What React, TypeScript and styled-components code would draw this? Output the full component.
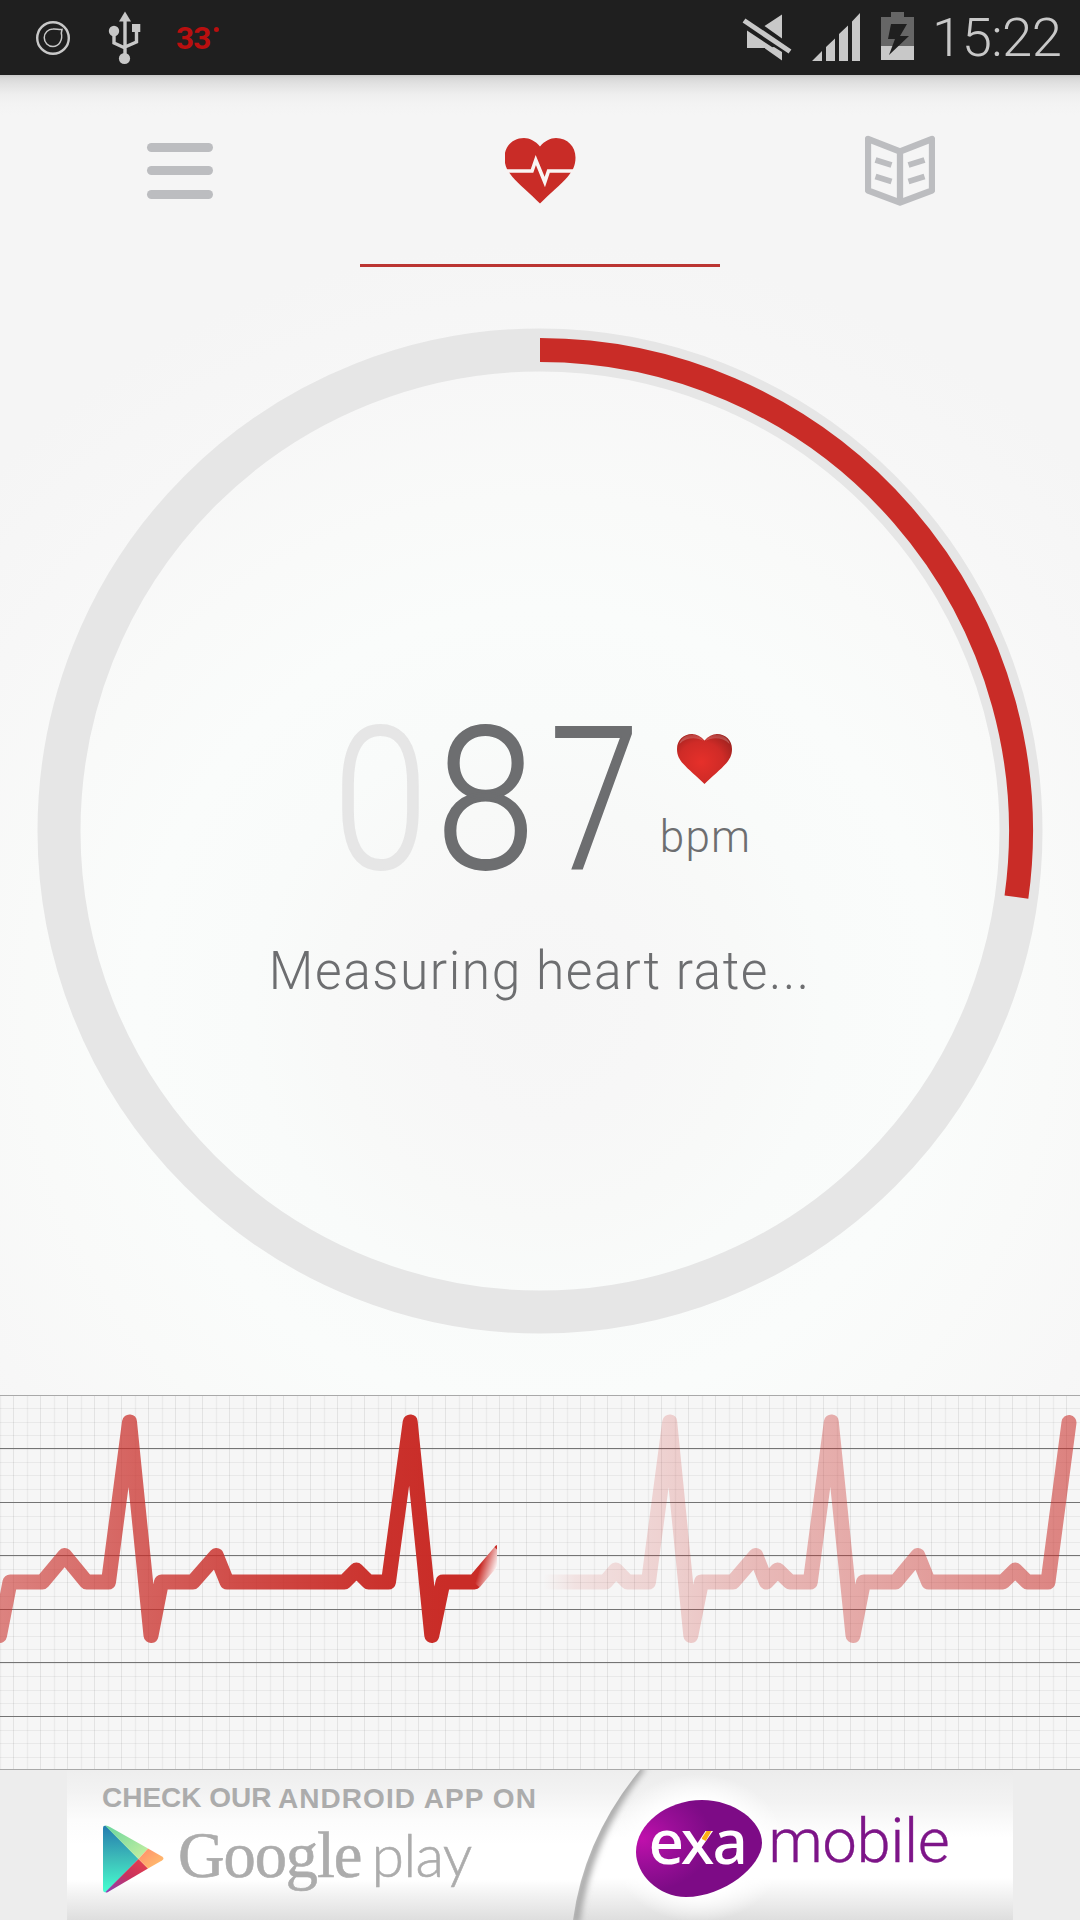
import React from 'react';
import styled, { createGlobalStyle } from 'styled-components';

const RED = '#c92c27';
const GREY = '#bcbdc0';
const INK = '#6d6e70';

const Global = createGlobalStyle`
  * { box-sizing: border-box; }
  html, body { margin: 0; padding: 0; background: #f5f5f5; }
  svg { display: block; flex: none; }
`;

const Screen = styled.div`
  width: 1080px;
  height: 1920px;
  display: flex;
  flex-direction: column;
  overflow: hidden;
  font-family: Roboto, "Liberation Sans", sans-serif;
  background: radial-gradient(
    ellipse 800px 800px at 540px 1010px,
    #f6f6f6 0, #f7f7f7 14%, #f8f9f8 26%, #f9fbfa 36%, #fafcfb 50%, #f9faf9 64%, #f7f7f7 80%, #f5f5f5 96%
  );
`;

const StatusBar = styled.header`
  flex: none;
  height: 75px;
  display: flex;
  align-items: center;
  background: #1f1f1f;
  color: #c8c8c8;
`;

const Temperature = styled.span`
  margin-left: 35px;
  padding-top: 3px;
  display: flex;
  align-items: flex-start;
  font-family: Roboto, sans-serif;
  font-weight: 700;
  font-size: 31.5px;
  line-height: 36px;
  letter-spacing: -0.8px;
  color: #b90f0f;
`;

const Degree = styled.i`
  width: 5px;
  height: 5px;
  margin: 6px 0 0 3px;
  border-radius: 50%;
  background: #b90f0f;
`;

const Spacer = styled.div`
  flex: 1;
`;

const Clock = styled.time`
  width: 160px;
  padding-left: 12px;
  font-weight: 300;
  font-size: 54.5px;
  line-height: 75px;
  white-space: nowrap;
  letter-spacing: -0.6px;
`;

const TabBar = styled.nav`
  flex: none;
  height: 192px;
  display: grid;
  grid-template-columns: repeat(3, 360px);
  background: linear-gradient(#c9c9c9 0, #d8d8d8 3px, #e3e3e3 10px, #eeeeee 19px, #f3f3f3 29px, #f5f5f5 40px, #f5f5f500 100%);
`;

const Tab = styled.div<{ $active?: boolean }>`
  display: flex;
  flex-direction: column;
  align-items: center;
  padding-top: 60px;
  border-bottom: 3px solid ${(p) => (p.$active ? '#bb3532' : 'transparent')};
`;

const MenuIcon = styled.div`
  display: flex;
  flex-direction: column;
  gap: 14.3px;
  padding-top: 8px;
`;

const MenuLine = styled.i`
  width: 65.5px;
  height: 9px;
  border-radius: 5px;
  background: ${GREY};
`;

const Gauge = styled.main`
  flex: none;
  height: 1128px;
  display: grid;
  justify-items: center;
  > * { grid-area: 1 / 1; }
`;

const Reading = styled.section`
  width: 700px;
  padding-top: 450px;
  display: flex;
  flex-direction: column;
  align-items: center;
`;

const Value = styled.div`
  height: 160px;
  width: 420px;
  display: flex;
  align-items: flex-start;
`;

const Digit = styled.span<{ $w: number; $squeeze: number; $dim?: boolean }>`
  width: ${(p) => p.$w}px;
  display: flex;
  justify-content: center;
  padding-top: 3px;
  font-weight: 300;
  font-size: 199px;
  line-height: 160px;
  transform: scaleX(${(p) => p.$squeeze});
  color: ${(p) => (p.$dim ? '#e6e6e6' : INK)};
  -webkit-text-stroke: 1.8px ${(p) => (p.$dim ? '#e6e6e6' : INK)};
`;

const Unit = styled.div`
  width: 92px;
  margin-left: 9.5px;
  padding-top: 17px;
  display: flex;
  flex-direction: column;
  align-items: center;
`;

const UnitLabel = styled.span`
  margin-top: 26px;
  padding-left: 2px;
  font-weight: 300;
  font-size: 44px;
  line-height: 54px;
  letter-spacing: 1.2px;
  color: ${INK};
`;

const Message = styled.p`
  margin: 59px 0 0;
  font-weight: 300;
  font-size: 53px;
  line-height: 70px;
  white-space: nowrap;
  letter-spacing: 1.6px;
  transform: scaleX(0.972);
  color: ${INK};
`;

const Chart = styled.section`
  flex: none;
  height: 375px;
  background: #f6f6f6;
`;

const AdStrip = styled.footer`
  flex: none;
  height: 150px;
  display: flex;
  justify-content: center;
  background: #ededed;
`;

const Ad = styled.div`
  width: 946px;
  height: 150px;
  display: grid;
  background: linear-gradient(#eeeeee 0, #f2f2f2 20px, #fcfcfc 50px, #ffffff 75px, #ffffff 110px, #f2f2f2 125px, #dedede 150px);
  > * { grid-area: 1 / 1; }
`;

const AdContent = styled.div`
  display: flex;
`;

const Store = styled.div`
  width: 568.5px;
  padding: 12px 0 0 35px;
  display: flex;
  flex-direction: column;
  color: #acacac;
`;

const Tagline = styled.div`
  display: flex;
  height: 32px;
  font-family: "Liberation Sans", sans-serif;
  font-weight: 700;
  font-size: 28px;
  line-height: 32px;
  white-space: nowrap;
`;

const TagPart = styled.span<{ $w: number; $drop?: number; $track: number }>`
  width: ${(p) => p.$w}px;
  padding-top: ${(p) => p.$drop ?? 0}px;
  letter-spacing: ${(p) => p.$track}px;
`;

const StoreBrand = styled.div`
  display: flex;
  height: 90px;
  padding-top: 11px;
`;

const Google = styled.span`
  width: 206.5px;
  padding-left: 13px;
  font-family: "Liberation Serif", serif;
  font-size: 64.5px;
  line-height: 62px;
  letter-spacing: -1.1px;
  -webkit-text-stroke: 0.6px #acacac;
`;

const Play = styled.span`
  font-family: Lato, sans-serif;
  font-weight: 300;
  font-size: 59px;
  line-height: 59px;
  letter-spacing: -0.8px;
  -webkit-text-stroke: 0.6px #acacac;
`;

const Exa = styled.div`
  display: flex;
  padding-top: 30px;
`;

const Blob = styled.div`
  width: 126px;
  height: 97px;
  display: grid;
  > * { grid-area: 1 / 1; }
`;

const ExaText = styled.span`
  position: relative;
  padding-left: 13px;
  font-family: "Noto Sans", sans-serif;
  font-weight: 500;
  font-size: 62px;
  line-height: 80px;
  letter-spacing: -2px;
  color: #fff;
`;

const Mobile = styled.span`
  padding-left: 7px;
  font-family: Roboto, sans-serif;
  font-weight: 300;
  font-size: 61px;
  line-height: 83px;
  color: #7d1588;
  -webkit-text-stroke: 0.4px #7d1588;
`;

const HEART =
  'M35.5 8.5C31 3 25 0 19.5 0C8 0 0 8.5 0 19.5C0 28 3 33 8 39C14 46 26 56 35.5 65.5C45 56 57 46 63 39C68 33 71 28 71 19.5C71 8.5 63 0 51.5 0C46 0 40 3 35.5 8.5Z';

function StatusIconsLeft() {
  return (
    <svg width="141" height="75" viewBox="0 0 141 75" fill="none" stroke="#c8c8c8">
      <circle cx="53" cy="38" r="15.8" strokeWidth="2.4" />
      <path d="M62 29.5L61.300 33C63 40 59 46.500 53 46.500A8.700 8.700 0 0 1 53 29C56 28.600 59 30 62 29.500Z" strokeWidth="1.5" />
      <path d="M125 20V58M114 31V43L125 48M136.500 31V42L125 47" strokeWidth="3.4" />
      <g fill="#c8c8c8" stroke="none">
        <path d="M125 11.500L131 21.500H119Z" />
        <circle cx="114" cy="31" r="5.2" />
        <rect x="132" y="24" width="8.300" height="8" />
        <circle cx="124.500" cy="58.500" r="5.600" />
      </g>
    </svg>
  );
}

function StatusIconsRight() {
  return (
    <svg width="180" height="75" viewBox="0 0 180 75" fill="#c8c8c8">
      <path d="M7 30.500L33.500 48H7ZM24.500 26L42 14.500V38.500ZM25 48L34 47L42 52V60.500L25 48.500Z" />
      <path d="M4 20.500L50 51.500" stroke="#c8c8c8" strokeWidth="5" />
      <path d="M72 61L82 51V61ZM86 47L95 38.500V61H86ZM99 34L108 25.500V61H99ZM112 21.500L120 13V61H112Z" />
      <path d="M141 17H151V12H164V17H174V46H141Z" fill="#666" />
      <rect x="141" y="46" width="33" height="14" />
      <path d="M151 24H167L160 36H169L149 55L155 39H148Z" fill="#1f1f1f" />
    </svg>
  );
}

function PulseHeart() {
  return (
    <svg width="71" height="66" viewBox="0.5 0 71 66" style={{ marginTop: 2.7 }}>
      <path d={HEART} fill={RED} />
      <path d="M2 33H27.500L31.300 22L40.300 44L44 33H69" fill="none" stroke="#f9f4f3" strokeWidth="3.600" strokeMiterlimit="10" />
    </svg>
  );
}

function Book() {
  return (
    <svg width="70" height="72" viewBox="0 0 70 72" fill="none" stroke={GREY}>
      <path d="M3 4L35 16.500L67 4V55.500L35 67.500L3 55.500ZM35 15V67" strokeWidth="6.300" strokeLinejoin="round" />
      <path d="M10.500 25L26.500 30M10.500 41.500L26.500 46.500M59.500 25L43.500 30M59.500 41.500L43.500 46.500" strokeWidth="6" />
    </svg>
  );
}

function Ring({ progress }: { progress: number }) {
  const a = progress * Math.PI * 2;
  const r = 481;
  const x = 540 + r * Math.sin(a);
  const y = 564 - r * Math.cos(a);
  return (
    <svg width="1080" height="1128" viewBox="0 0 1080 1128" fill="none">
      <circle cx="540" cy="564" r="481" stroke="#e6e6e6" strokeWidth="43" />
      <path d={`M540 83A${r} ${r} 0 ${progress > 0.5 ? 1 : 0} 1 ${x} ${y}`} stroke={RED} strokeWidth="24" />
    </svg>
  );
}

function SmallHeart() {
  return (
    <svg width="55" height="50" viewBox="0 0 71 65.500" preserveAspectRatio="none">
      <defs>
        <radialGradient id="beat" cx="0.44" cy="0.56" r="0.74">
          <stop offset="0" stopColor="#e6302a" />
          <stop offset="0.55" stopColor="#cf2b27" />
          <stop offset="1" stopColor="#8f1f1c" />
        </radialGradient>
        <linearGradient id="shine" x1="0" y1="0" x2="0" y2="1">
          <stop offset="0" stopColor="#fff" stopOpacity="0.12" />
          <stop offset="1" stopColor="#fff" stopOpacity="0.28" />
        </linearGradient>
      </defs>
      <path d={HEART} fill="url(#beat)" />
      <path d="M3 13C7-1 27-3 34 9C26 4 12 4 3 13ZM68 13C64-1 44-3 37 9C45 4 59 4 68 13Z" fill="url(#shine)" />
    </svg>
  );
}

const LEFT_TRACE =
  'M-0.5 240.500L10 187H42.500L64.700 160.500L86.500 187H108.500L129.500 27L151 240.500L161.500 187H193L216.300 160.500L227 187H344.500L356.400 175L368.500 187H388.500L410.200 27L431.800 240.500L443 187H474.500L500 157';
const RIGHT_TRACE =
  'M545 187H605.500L615.800 175L627.500 187H648.500L669.700 27L690.800 240.500L701.500 187H733L755.800 160.500L766.300 187L777.600 175L790 187H810.300L831.300 27L853 240.500L863.500 187H895.700L917.800 160.500L928.500 187H1003L1015.200 175L1027.300 187H1048L1069 27.500';

function Cardiogram() {
  const columns = Array.from({ length: 80 }, (_, i) => i);
  const rows = Array.from({ length: 28 }, (_, i) => i);
  return (
    <svg width="1080" height="375" viewBox="0 0 1080 375" fill="none">
      <defs>
        <linearGradient id="oldTrace" gradientUnits="userSpaceOnUse" x1="543" y1="0" x2="1080" y2="0">
          <stop offset="0" stopColor={RED} stopOpacity="0" />
          <stop offset="0.06" stopColor={RED} stopOpacity="0.1" />
          <stop offset="0.24" stopColor={RED} stopOpacity="0.19" />
          <stop offset="0.4" stopColor={RED} stopOpacity="0.3" />
          <stop offset="0.7" stopColor={RED} stopOpacity="0.43" />
          <stop offset="1" stopColor={RED} stopOpacity="0.58" />
        </linearGradient>
        <linearGradient id="newTrace" gradientUnits="userSpaceOnUse" x1="0" y1="0" x2="497" y2="0">
          <stop offset="0" stopColor={RED} stopOpacity="0.57" />
          <stop offset="0.26" stopColor={RED} stopOpacity="0.72" />
          <stop offset="0.48" stopColor={RED} stopOpacity="0.84" />
          <stop offset="0.76" stopColor={RED} stopOpacity="0.97" />
          <stop offset="0.9" stopColor={RED} />
        </linearGradient>
        <linearGradient id="head" gradientUnits="userSpaceOnUse" x1="480" y1="172" x2="496" y2="177">
          <stop offset="0" stopColor="#fff" stopOpacity="0" />
          <stop offset="1" stopColor="#fff" />
        </linearGradient>
        <clipPath id="written">
          <rect width="497" height="375" />
        </clipPath>
      </defs>
      {columns.map((i) => (
        <path key={i} d={`M${Math.floor(i * 13.5) + 0.5} 1V374`} stroke="#000" strokeOpacity={i % 2 ? 0.075 : 0.045} strokeWidth={i % 2 ? 1 : 1.5} />
      ))}
      {rows.map((i) => (
        <path key={i} d={`M0 ${Math.round(i * 13.39) + 0.5}H1080`} stroke="#000" strokeOpacity="0.05" />
      ))}
      {[53, 107, 160, 214, 267, 321].map((y) => (
        <path key={y} d={`M0 ${y + 0.5}H1080`} stroke="#747474" />
      ))}
      <path d="M0 0.500H1080M0 374.500H1080" stroke="#a9a9a9" />
      <g strokeWidth="15" strokeLinejoin="round">
        <path d={RIGHT_TRACE} stroke="url(#oldTrace)" strokeLinecap="round" />
        <g clipPath="url(#written)">
          <path d={LEFT_TRACE} stroke="url(#newTrace)" strokeLinecap="round" />
          <path d="M474 187.500L500 157" stroke="url(#head)" strokeWidth="16" />
        </g>
      </g>
    </svg>
  );
}

function PlayLogo() {
  return (
    <svg width="63" height="68" viewBox="0 0 63 68">
      <defs>
        <linearGradient id="blue" x1="0" y1="0" x2="0" y2="1">
          <stop offset="0" stopColor="#247cb0" />
          <stop offset="0.5" stopColor="#3dbdb9" />
          <stop offset="1" stopColor="#46ffd0" />
        </linearGradient>
        <linearGradient id="green" x1="0" y1="0" x2="1" y2="1">
          <stop offset="0" stopColor="#69d69e" />
          <stop offset="1" stopColor="#c9f0a0" />
        </linearGradient>
        <linearGradient id="plum" x1="1" y1="0" x2="0" y2="1">
          <stop offset="0" stopColor="#e8414a" />
          <stop offset="0.5" stopColor="#c8325f" />
          <stop offset="1" stopColor="#8740b8" />
        </linearGradient>
        <linearGradient id="orange" x1="0" y1="0" x2="1" y2="1">
          <stop offset="0" stopColor="#ff8c6c" />
          <stop offset="1" stopColor="#ffc46c" />
        </linearGradient>
      </defs>
      <path d="M1 3Q1 0 4 1L36.500 34L4 67Q1 68 1 64Z" fill="url(#blue)" />
      <path d="M3 0.500Q5 0 8 2L46 23.500L36.500 34Z" fill="url(#green)" />
      <path d="M36.500 34L46 43.500L6 67Q4 68 3.500 67Z" fill="url(#plum)" />
      <path d="M46 23.500L60 31.500Q63 33.500 60 35.500L46 43.500L36.500 34Z" fill="url(#orange)" />
    </svg>
  );
}

function AdCurve() {
  return (
    <svg width="946" height="150" viewBox="0 0 946 150">
      <defs>
        <linearGradient id="panel" x1="0" y1="0" x2="0" y2="1">
          <stop offset="0" stopColor="#ececec" />
          <stop offset="0.2" stopColor="#f2f2f2" />
          <stop offset="0.45" stopColor="#fff" />
          <stop offset="0.72" stopColor="#fff" />
          <stop offset="1" stopColor="#dedede" />
        </linearGradient>
        <radialGradient id="halo">
          <stop offset="0.65" stopColor="#fff" />
          <stop offset="1" stopColor="#fff" stopOpacity="0" />
        </radialGradient>
        <filter id="soft" x="-20%" y="-20%" width="140%" height="140%">
          <feGaussianBlur stdDeviation="3" />
        </filter>
        <clipPath id="side">
          <path d="M573 0Q517 68 506 150H946V0Z" />
        </clipPath>
      </defs>
      <g clipPath="url(#side)">
        <rect x="500" width="446" height="150" fill="url(#panel)" />
        <path d="M575-4Q519 68 508 154" fill="none" stroke="#a6a6a6" strokeWidth="9" filter="url(#soft)" />
        <ellipse cx="631" cy="78" rx="88" ry="74" fill="url(#halo)" />
      </g>
    </svg>
  );
}

function ExaBlob() {
  return (
    <svg width="126" height="97" viewBox="0 0 126 97">
      <defs>
        <radialGradient id="violet" cx="0.05" cy="0.4" r="0.55">
          <stop offset="0" stopColor="#c010ac" />
          <stop offset="0.5" stopColor="#9a0e98" />
          <stop offset="1" stopColor="#7d0b86" />
        </radialGradient>
      </defs>
      <path d="M66 0C98 0 126 21 126 43C126 66 88 97 50 97C22 97 0 74 0 52C0 24 31 0 66 0Z" fill="url(#violet)" />
    </svg>
  );
}

const Accent = styled.i`
  position: absolute;
  left: 66px;
  top: 31px;
  width: 10px;
  height: 10px;
  background: #fdaf17;
  clip-path: polygon(50% 0, 100% 0, 42% 100%, 0 78%);
`;

export default function App() {
  return (
    <Screen>
      <Global />
      <StatusBar>
        <StatusIconsLeft />
        <Temperature>
          33
          <Degree />
        </Temperature>
        <Spacer />
        <StatusIconsRight />
        <Clock>15:22</Clock>
      </StatusBar>
      <TabBar>
        <Tab>
          <MenuIcon>
            <MenuLine />
            <MenuLine />
            <MenuLine />
          </MenuIcon>
        </Tab>
        <Tab $active>
          <PulseHeart />
        </Tab>
        <Tab>
          <Book />
        </Tab>
      </TabBar>
      <Gauge>
        <Ring progress={97.9 / 360} />
        <Reading>
          <Value>
            <Digit $w={101} $squeeze={0.86} $dim>0</Digit>
            <Digit $w={109} $squeeze={0.9}>8</Digit>
            <Digit $w={109} $squeeze={0.81}>7</Digit>
            <Unit>
              <SmallHeart />
              <UnitLabel>bpm</UnitLabel>
            </Unit>
          </Value>
          <Message>Measuring heart rate...</Message>
        </Reading>
      </Gauge>
      <Chart>
        <Cardiogram />
      </Chart>
      <AdStrip>
        <Ad>
          <AdCurve />
          <AdContent>
            <Store>
              <Tagline>
                <TagPart $w={176} $track={0}>CHECK OUR</TagPart>
                <TagPart $w={270} $track={1.05} $drop={1}>ANDROID APP ON</TagPart>
              </Tagline>
              <StoreBrand>
                <PlayLogo />
                <Google>Google</Google>
                <Play>play</Play>
              </StoreBrand>
            </Store>
            <Exa>
              <Blob>
                <ExaBlob />
                <ExaText>
                  exa
                  <Accent />
                </ExaText>
              </Blob>
              <Mobile>mobile</Mobile>
            </Exa>
          </AdContent>
        </Ad>
      </AdStrip>
    </Screen>
  );
}
